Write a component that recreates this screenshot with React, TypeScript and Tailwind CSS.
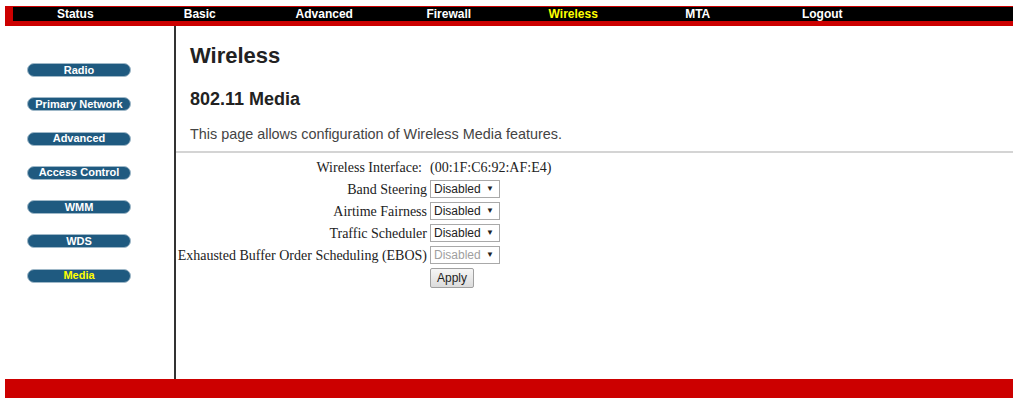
import React from "react";

const navItems = ["Status", "Basic", "Advanced", "Firewall", "Wireless", "MTA", "Logout"];
const sideItems = ["Radio", "Primary Network", "Advanced", "Access Control", "WMM", "WDS", "Media"];

function Select({ disabled }: { disabled?: boolean }) {
  return (
    <div
      className={`flex h-[18px] w-[70px] items-center justify-between border border-[#a9a9a9] bg-white pl-[3px] pr-[5px] text-[12px] ${
        disabled ? "text-[#a0a0a0]" : "text-[#222]"
      }`}
      style={{ fontFamily: '"Liberation Sans", Arial, sans-serif' }}
    >
      <span>Disabled</span>
      <span className="text-[8px] text-[#222]">▼</span>
    </div>
  );
}

export default function App() {
  const rows = [
    { label: "Band Steering", disabled: false },
    { label: "Airtime Fairness", disabled: false },
    { label: "Traffic Scheduler", disabled: false },
    { label: "Exhausted Buffer Order Scheduling (EBOS)", disabled: true },
  ];
  return (
    <div
      className="h-[409px] w-[1021px] bg-white pl-[5px] pt-[6px]"
      style={{ fontFamily: '"Liberation Sans", Arial, sans-serif' }}
    >
      <div className="w-[1008px]">
        {/* top nav */}
        <div className="h-[20px] bg-[#cc0000] pb-[5px] pl-[8px] pt-[1px]">
          <div className="flex h-[14px] bg-black">
            {navItems.map((n) => (
              <div
                key={n}
                className={`flex w-[124.5px] items-center justify-center text-[12px] font-bold leading-none ${
                  n === "Wireless" ? "text-[#ffff00]" : "text-white"
                }`}
              >
                {n}
              </div>
            ))}
          </div>
        </div>

        {/* main */}
        <div className="flex h-[353px]">
          <div className="w-[169px] pl-[22px] pt-[37px]">
            <div className="flex flex-col gap-[20.3px]">
              {sideItems.map((s) => (
                <div
                  key={s}
                  className={`flex h-[14px] w-[104px] items-center justify-center rounded-full border border-[#9fb8c8] bg-[#1f5a80] text-[11px] font-bold leading-none ${
                    s === "Media" ? "text-[#ffff00]" : "text-white"
                  }`}
                >
                  {s}
                </div>
              ))}
            </div>
          </div>
          <div className="w-[2px] bg-[#333]" />
          <div className="flex-1">
            <div className="pl-[14px]">
              <h1 className="pt-[17px] text-[22px] font-bold leading-[26px] text-[#222]">Wireless</h1>
              <h2 className="pt-[19px] text-[18px] font-bold leading-[22px] text-[#222]">802.11 Media</h2>
              <p className="pt-[15px] text-[14.4px] leading-[18px] text-[#444]">
                This page allows configuration of Wireless Media features.
              </p>
            </div>
            <div className="mt-[8px] h-[2px] bg-[#d4d4d4]" />
            <div
              className="flex flex-col pt-[3px] text-[14px] text-[#222]"
              style={{ fontFamily: '"Liberation Serif", "Times New Roman", serif' }}
            >
              <div className="flex h-[22px] items-center">
                <div className="w-[254px] whitespace-nowrap pr-[8px] text-right">Wireless Interface:</div>
                <div>(00:1F:C6:92:AF:E4)</div>
              </div>
              {rows.map((r) => (
                <div key={r.label} className="flex h-[22px] items-center">
                  <div className="w-[254px] whitespace-nowrap pr-[3px] text-right">{r.label}</div>
                  <Select disabled={r.disabled} />
                </div>
              ))}
              <div className="flex h-[24px] items-center">
                <div className="w-[254px]" />
                <button
                  className="h-[20px] w-[44px] rounded-[2px] border border-[#a0a0a0] bg-gradient-to-b from-[#f6f6f6] to-[#dcdcdc] text-[12px] text-[#222]"
                  style={{ fontFamily: '"Liberation Sans", Arial, sans-serif' }}
                >
                  Apply
                </button>
              </div>
            </div>
          </div>
        </div>

        {/* bottom bar */}
        <div className="h-[19px] bg-[#cc0000]" />
      </div>
    </div>
  );
}
